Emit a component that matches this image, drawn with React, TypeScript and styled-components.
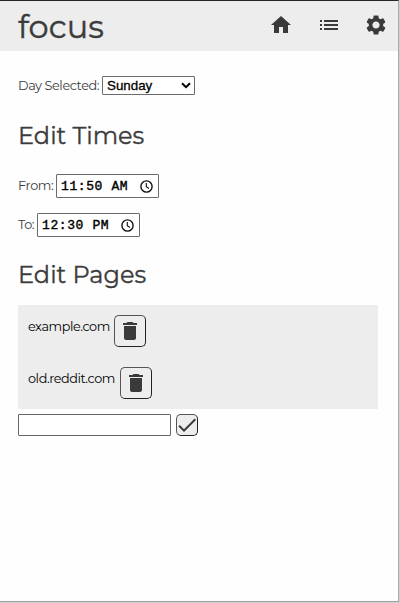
import React from 'react';
import styled, { createGlobalStyle } from 'styled-components';

const GlobalStyle = createGlobalStyle`
  *, *::before, *::after { box-sizing: border-box; }
  body { margin: 0; background: #cfcfcf; }
`;

const Popup = styled.div`
  display: flex;
  flex-direction: column;
  width: 399px;
  height: 602px;
  background: #fefefe;
  border-top: 1px solid #2a222b;
  border-right: 1px solid #aaa;
  border-bottom: 1px solid #a0a0a0;
  font-family: Montserrat, Inter, sans-serif;
  color: #3c3c3c;
`;

const Header = styled.header`
  display: flex;
  justify-content: space-between;
  height: 50px;
  padding: 0 10px 0 18px;
  background: #ededed;
`;

const Title = styled.h1`
  margin: 0;
  font-size: 32px;
  font-weight: 400;
  line-height: 52px;
  -webkit-text-stroke: 0.4px #3c3c3c;
`;

const Nav = styled.nav`
  display: flex;
  align-items: center;
  gap: 23.5px;
  padding-bottom: 2px;
`;

const Icon = styled.svg`
  display: block;
  flex: none;
  width: 24px;
  height: 24px;
  fill: #3a3a3a;
`;

const Main = styled.main`
  display: flex;
  flex-direction: column;
  padding: 25px 20px 0 18px;
`;

const Field = styled.label`
  display: flex;
  align-items: center;
`;

const Times = styled.div`
  display: flex;
  flex-direction: column;
  gap: 15px;
  margin: 23px 0;
`;

const Caption = styled.span<{ $width: number }>`
  flex: none;
  width: ${(p) => p.$width}px;
  font-size: 12.8px;
  line-height: 16px;
  letter-spacing: -0.4px;
  white-space: nowrap;
`;

const SelectBox = styled.span`
  display: grid;
  align-items: center;
  width: 93px;
  height: 19px;
  border: 1px solid #6b6b6b;
  border-radius: 1px;
  background: #fff;

  > * { grid-area: 1 / 1; }
`;

const Select = styled.select`
  appearance: none;
  width: 100%;
  height: 17px;
  padding: 0 0 0 4px;
  border: 0;
  background: transparent;
  color: #000;
  font: 13.33px/17px 'Liberation Sans', Arial, sans-serif;
  -webkit-text-stroke: 0.3px #000;
`;

const Chevron = styled.svg`
  justify-self: end;
  width: 10px;
  height: 7px;
  margin-right: 3px;
  fill: none;
  stroke: #000;
  stroke-width: 2;
  pointer-events: none;
`;

const Heading = styled.h2<{ $top?: number }>`
  height: 30px;
  margin: ${(p) => p.$top ?? 0}px 0 0;
  font-size: 24px;
  font-weight: 400;
  line-height: 30px;
  -webkit-text-stroke: 0.35px #3c3c3c;
`;

const TimeBox = styled.span`
  display: flex;
  align-items: center;
  justify-content: space-between;
  width: 103px;
  height: 24px;
  padding: 0 5px 0 4px;
  border: 1px solid #6b6b6b;
  border-radius: 1px;
  background: #fff;
`;

const TimeInput = styled.input`
  width: 74px;
  height: 21px;
  padding: 1px 0 0;
  border: 0;
  outline: 0;
  background: transparent;
  color: #000;
  font: 13px/20px 'Courier New', 'Liberation Mono', monospace;
  letter-spacing: 0.6px;
  -webkit-text-stroke: 0.4px #000;
`;

const Clock = styled.svg`
  flex: none;
  width: 13px;
  height: 13px;
  fill: none;
  stroke: #111;
  stroke-width: 1.4;
`;

const PageList = styled.ul`
  margin: 15px 0 0;
  padding: 0;
  list-style: none;
  background: #ededed;
`;

const PageRow = styled.li`
  display: flex;
  align-items: flex-start;
  gap: 5px;
  height: 52px;
  padding: 10px;
`;

const PageName = styled.span<{ $width: number }>`
  width: ${(p) => p.$width}px;
  padding-top: 4px;
  color: #000;
  font-size: 12.8px;
  line-height: 16px;
  letter-spacing: -0.42px;
  white-space: nowrap;
`;

const IconButton = styled.button<{ $size: number }>`
  display: flex;
  align-items: center;
  justify-content: center;
  flex: none;
  width: ${(p) => p.$size}px;
  height: ${(p) => p.$size}px;
  padding: 0;
  border: 1px solid;
  border-color: #555 #222 #222 #555;
  border-radius: 5px;
  background: #ededed;
`;

const AddRow = styled.form`
  display: flex;
  gap: 5px;
  margin-top: 5px;
`;

const UrlInput = styled.input`
  width: 153px;
  height: 22px;
  padding: 0 4px;
  border: 1px solid #666;
  border-radius: 1px;
  background: #fff;
  font: 13.33px 'Liberation Sans', Arial, sans-serif;
`;

const paths = {
  home: 'M10 20v-6h4v6h5v-8h3L12 3 2 12h3v8z',
  list: 'M3 13h2v-2H3v2zm0 4h2v-2H3v2zm0-8h2V7H3v2zm4 4h14v-2H7v2zm0 4h14v-2H7v2zM7 7v2h14V7H7z',
  settings:
    'M19.14 12.94c.04-.3.06-.61.06-.94 0-.32-.02-.64-.07-.94l2.03-1.58c.18-.14.23-.41.12-.61l-1.92-3.32c-.12-.22-.37-.29-.59-.22l-2.39.96c-.5-.38-1.03-.7-1.62-.94l-.36-2.54c-.04-.24-.24-.41-.48-.41h-3.84c-.24 0-.43.17-.47.41l-.36 2.54c-.59.24-1.13.57-1.62.94l-2.39-.96c-.22-.08-.47 0-.59.22L2.74 8.87c-.12.21-.08.47.12.61l2.03 1.58c-.05.3-.09.63-.09.94s.02.64.07.94l-2.03 1.58c-.18.14-.23.41-.12.61l1.92 3.32c.12.22.37.29.59.22l2.39-.96c.5.38 1.03.7 1.62.94l.36 2.54c.05.24.24.41.48.41h3.84c.24 0 .44-.17.47-.41l.36-2.54c.59-.24 1.13-.56 1.62-.94l2.39.96c.22.08.47 0 .59-.22l1.92-3.32c.12-.22.07-.47-.12-.61l-2.01-1.58zM12 15.6c-1.98 0-3.6-1.62-3.6-3.6s1.62-3.6 3.6-3.6 3.6 1.62 3.6 3.6-1.62 3.6-3.6 3.6z',
  trash: 'M6 19c0 1.1.9 2 2 2h8c1.1 0 2-.9 2-2V7H6v12zM19 4h-3.5l-1-1h-5l-1 1H5v2h14V4z',
  check: 'M9 16.17L4.83 12l-1.42 1.41L9 19 21 7l-1.41-1.41z',
};

const Glyph = ({ name }: { name: keyof typeof paths }) => (
  <Icon viewBox="0 0 24 24" aria-hidden="true">
    <path d={paths[name]} />
  </Icon>
);

const TimeField = ({ value }: { value: string }) => (
  <TimeBox>
    <TimeInput defaultValue={value} />
    <Clock viewBox="0 0 13 13">
      <circle cx="6.5" cy="6.5" r="5.6" />
      <path d="M6.3 3v3.8L9 8.5" strokeWidth="1.1" />
    </Clock>
  </TimeBox>
);

const pages = [
  { name: 'example.com', width: 81 },
  { name: 'old.reddit.com', width: 87 },
];

export default function App() {
  return (
    <>
      <GlobalStyle />
      <Popup>
        <Header>
          <Title>focus</Title>
          <Nav>
            <Glyph name="home" />
            <Glyph name="list" />
            <Glyph name="settings" />
          </Nav>
        </Header>
        <Main>
          <Field>
            <Caption $width={84}>Day Selected:</Caption>
            <SelectBox>
              <Select defaultValue="Sunday">
                <option>Sunday</option>
              </Select>
              <Chevron viewBox="0 0 10 7">
                <path d="M1 1.2l4 4 4-4" />
              </Chevron>
            </SelectBox>
          </Field>
          <Heading $top={26}>Edit Times</Heading>
          <Times>
            <Field>
              <Caption $width={38}>From:</Caption>
              <TimeField value="11:50 AM" />
            </Field>
            <Field>
              <Caption $width={19}>To:</Caption>
              <TimeField value="12:30 PM" />
            </Field>
          </Times>
          <Heading>Edit Pages</Heading>
          <PageList>
            {pages.map((page) => (
              <PageRow key={page.name}>
                <PageName $width={page.width}>{page.name}</PageName>
                <IconButton $size={32} type="button" aria-label="Delete">
                  <Glyph name="trash" />
                </IconButton>
              </PageRow>
            ))}
          </PageList>
          <AddRow>
            <UrlInput />
            <IconButton $size={22} type="button" aria-label="Add">
              <Glyph name="check" />
            </IconButton>
          </AddRow>
        </Main>
      </Popup>
    </>
  );
}
